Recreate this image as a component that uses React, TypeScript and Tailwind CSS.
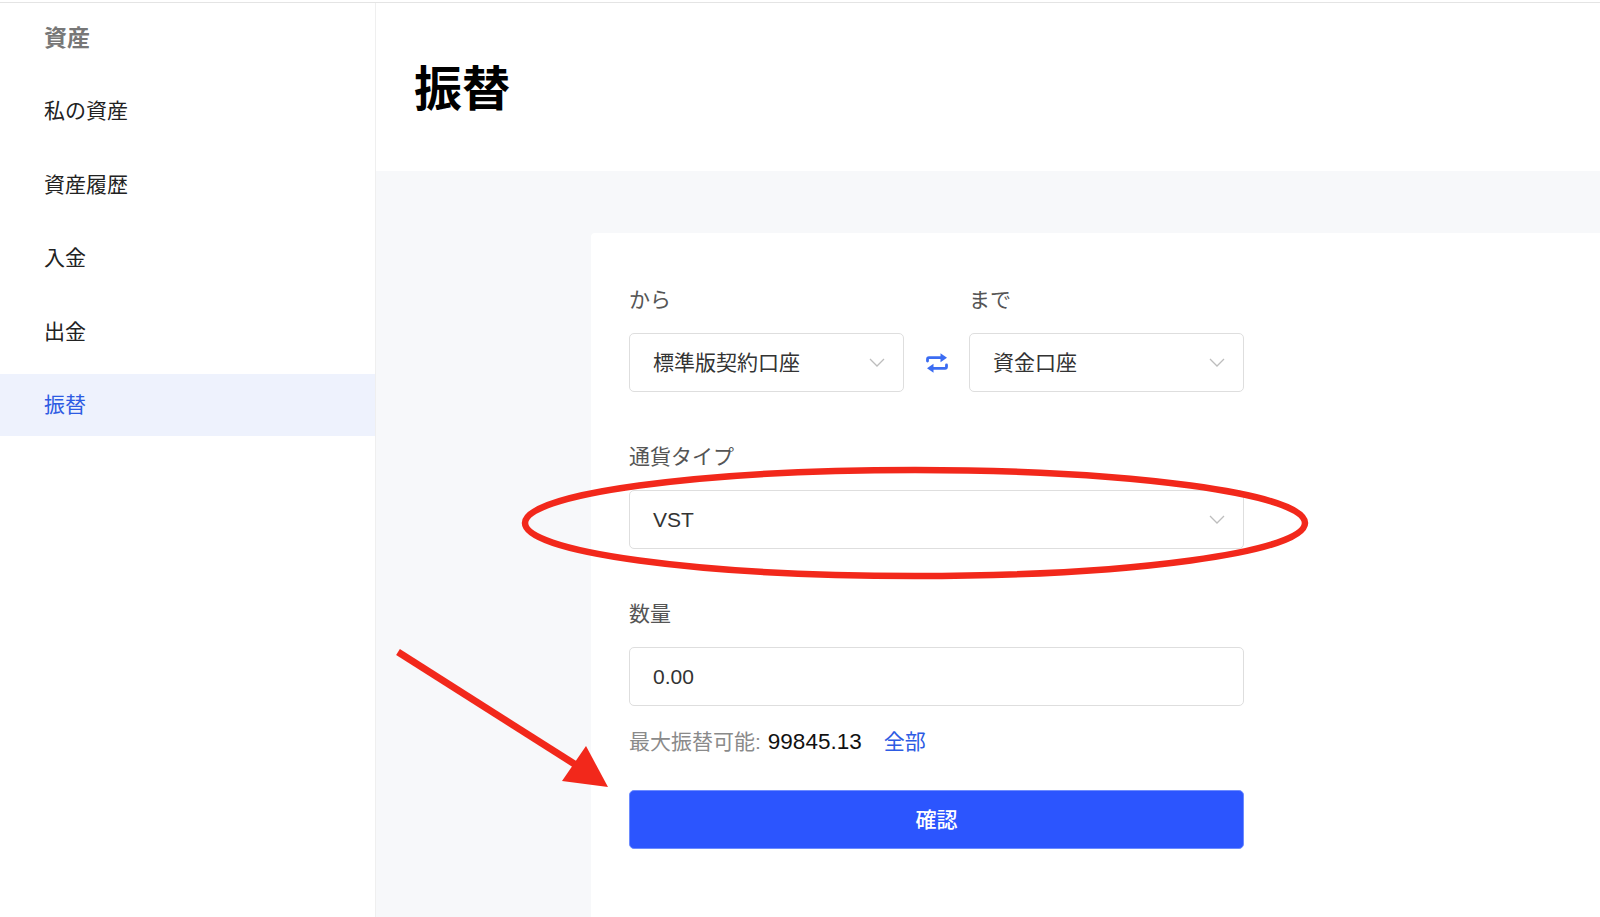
// transfer page
const font = { fontFamily: '"Liberation Sans", "Noto Sans CJK JP", sans-serif' };

const navItems = ["私の資産", "資産履歴", "入金", "出金", "振替"];

function Chevron() {
  return (
    <svg width="16" height="9" viewBox="0 0 16 9" fill="none">
      <path d="M1 1l7 7 7-7" stroke="#bdbdbd" strokeWidth="1.3" />
    </svg>
  );
}

function SwapIcon() {
  return (
    <svg width="24" height="22" viewBox="0 0 24 22" fill="none">
      <path d="M2.5 9V7.2c0-.9.6-1.5 1.5-1.5h12.5" stroke="#3b6cf2" strokeWidth="2.8" strokeLinecap="round" />
      <path d="M15.5 1.2l6.5 4.5-6.5 4.5z" fill="#3b6cf2" />
      <path d="M21.5 13v1.8c0 .9-.6 1.5-1.5 1.5H7.5" stroke="#3b6cf2" strokeWidth="2.8" strokeLinecap="round" />
      <path d="M8.5 11.8L2 16.3l6.5 4.5z" fill="#3b6cf2" />
    </svg>
  );
}

function SelectBox({ value, className }: { value: string; className?: string }) {
  return (
    <div
      className={`h-[59px] flex items-center justify-between pl-[23px] pr-[18px] border border-[#dedede] rounded-[5px] bg-white ${className ?? ""}`}
    >
      <span className="text-[21px] text-[#333]">{value}</span>
      <Chevron />
    </div>
  );
}

export default function App() {
  return (
    <div className="relative w-full h-[915px] mt-[2px] border-t border-[#e4e4e4] flex bg-white overflow-hidden" style={font}>
      {/* sidebar */}
      <aside className="w-[376px] shrink-0 border-r border-[#efefef] bg-white">
        <div className="pl-[44px] pt-[18px] h-[77px] text-[23px] font-semibold text-[#777]">資産</div>
        <nav className="flex flex-col gap-[11.5px]">
          {navItems.map((item) => (
            <div
              key={item}
              className={`h-[62px] flex items-center pl-[44px] text-[21px] ${
                item === "振替" ? "bg-[#eef2fd] text-[#2d5be3]" : "text-[#222]"
              }`}
            >
              {item}
            </div>
          ))}
        </nav>
      </aside>

      {/* main */}
      <main className="flex-1 flex flex-col">
        <div className="h-[168px] shrink-0 flex items-center pl-[38px] pt-[5px] bg-white">
          <h1 className="text-[48px] font-bold text-black">振替</h1>
        </div>
        <div className="flex-1 bg-[#f7f8fa] pl-[215px] pt-[62px]">
          <div className="h-full bg-white rounded-tl-[4px] pl-[38px] pt-[53px]">
            <div className="w-[615px]">
              <div className="flex">
                <div className="w-[275px]">
                  <div className="h-[28px] leading-[28px] text-[21px] text-[#555]">から</div>
                  <SelectBox value="標準版契約口座" className="mt-[19px]" />
                </div>
                <div className="w-[65px] flex items-end justify-center pb-[18px]">
                  <SwapIcon />
                </div>
                <div className="flex-1">
                  <div className="h-[28px] leading-[28px] text-[21px] text-[#555]">まで</div>
                  <SelectBox value="資金口座" className="mt-[19px]" />
                </div>
              </div>

              <div className="mt-[51px] h-[28px] leading-[28px] text-[21px] text-[#555]">通貨タイプ</div>
              <SelectBox value="VST" className="mt-[19px]" />

              <div className="mt-[51px] h-[28px] leading-[28px] text-[21px] text-[#555]">数量</div>
              <div className="mt-[19px] h-[59px] flex items-center pl-[23px] border border-[#dedede] rounded-[5px]">
                <span className="text-[21px] text-[#333]">0.00</span>
              </div>

              <div className="mt-[22px] h-[28px] leading-[28px] text-[21px] flex items-center">
                <span className="text-[#8a8a8a]">最大振替可能:</span>
                <span className="ml-[7px] text-[22.5px] text-[#111]">99845.13</span>
                <span className="ml-[22px] text-[#2d5be3]">全部</span>
              </div>

              <button className="mt-[34px] w-full h-[59px] rounded-[5px] bg-[#2c55fe] border border-[#6d8cff] text-white text-[21px] font-medium">
                確認
              </button>
            </div>
          </div>
        </div>
      </main>

      {/* annotations */}
      <svg className="absolute inset-0 pointer-events-none" width="1600" height="917" viewBox="0 0 1600 917">
        <ellipse cx="915" cy="520" rx="390" ry="53" fill="none" stroke="#f2281b" strokeWidth="6.5" />
        <line x1="398" y1="649" x2="576" y2="762" stroke="#f2281b" strokeWidth="7" />
        <path d="M608 784L562 778L586 743Z" fill="#f2281b" />
      </svg>
    </div>
  );
}
